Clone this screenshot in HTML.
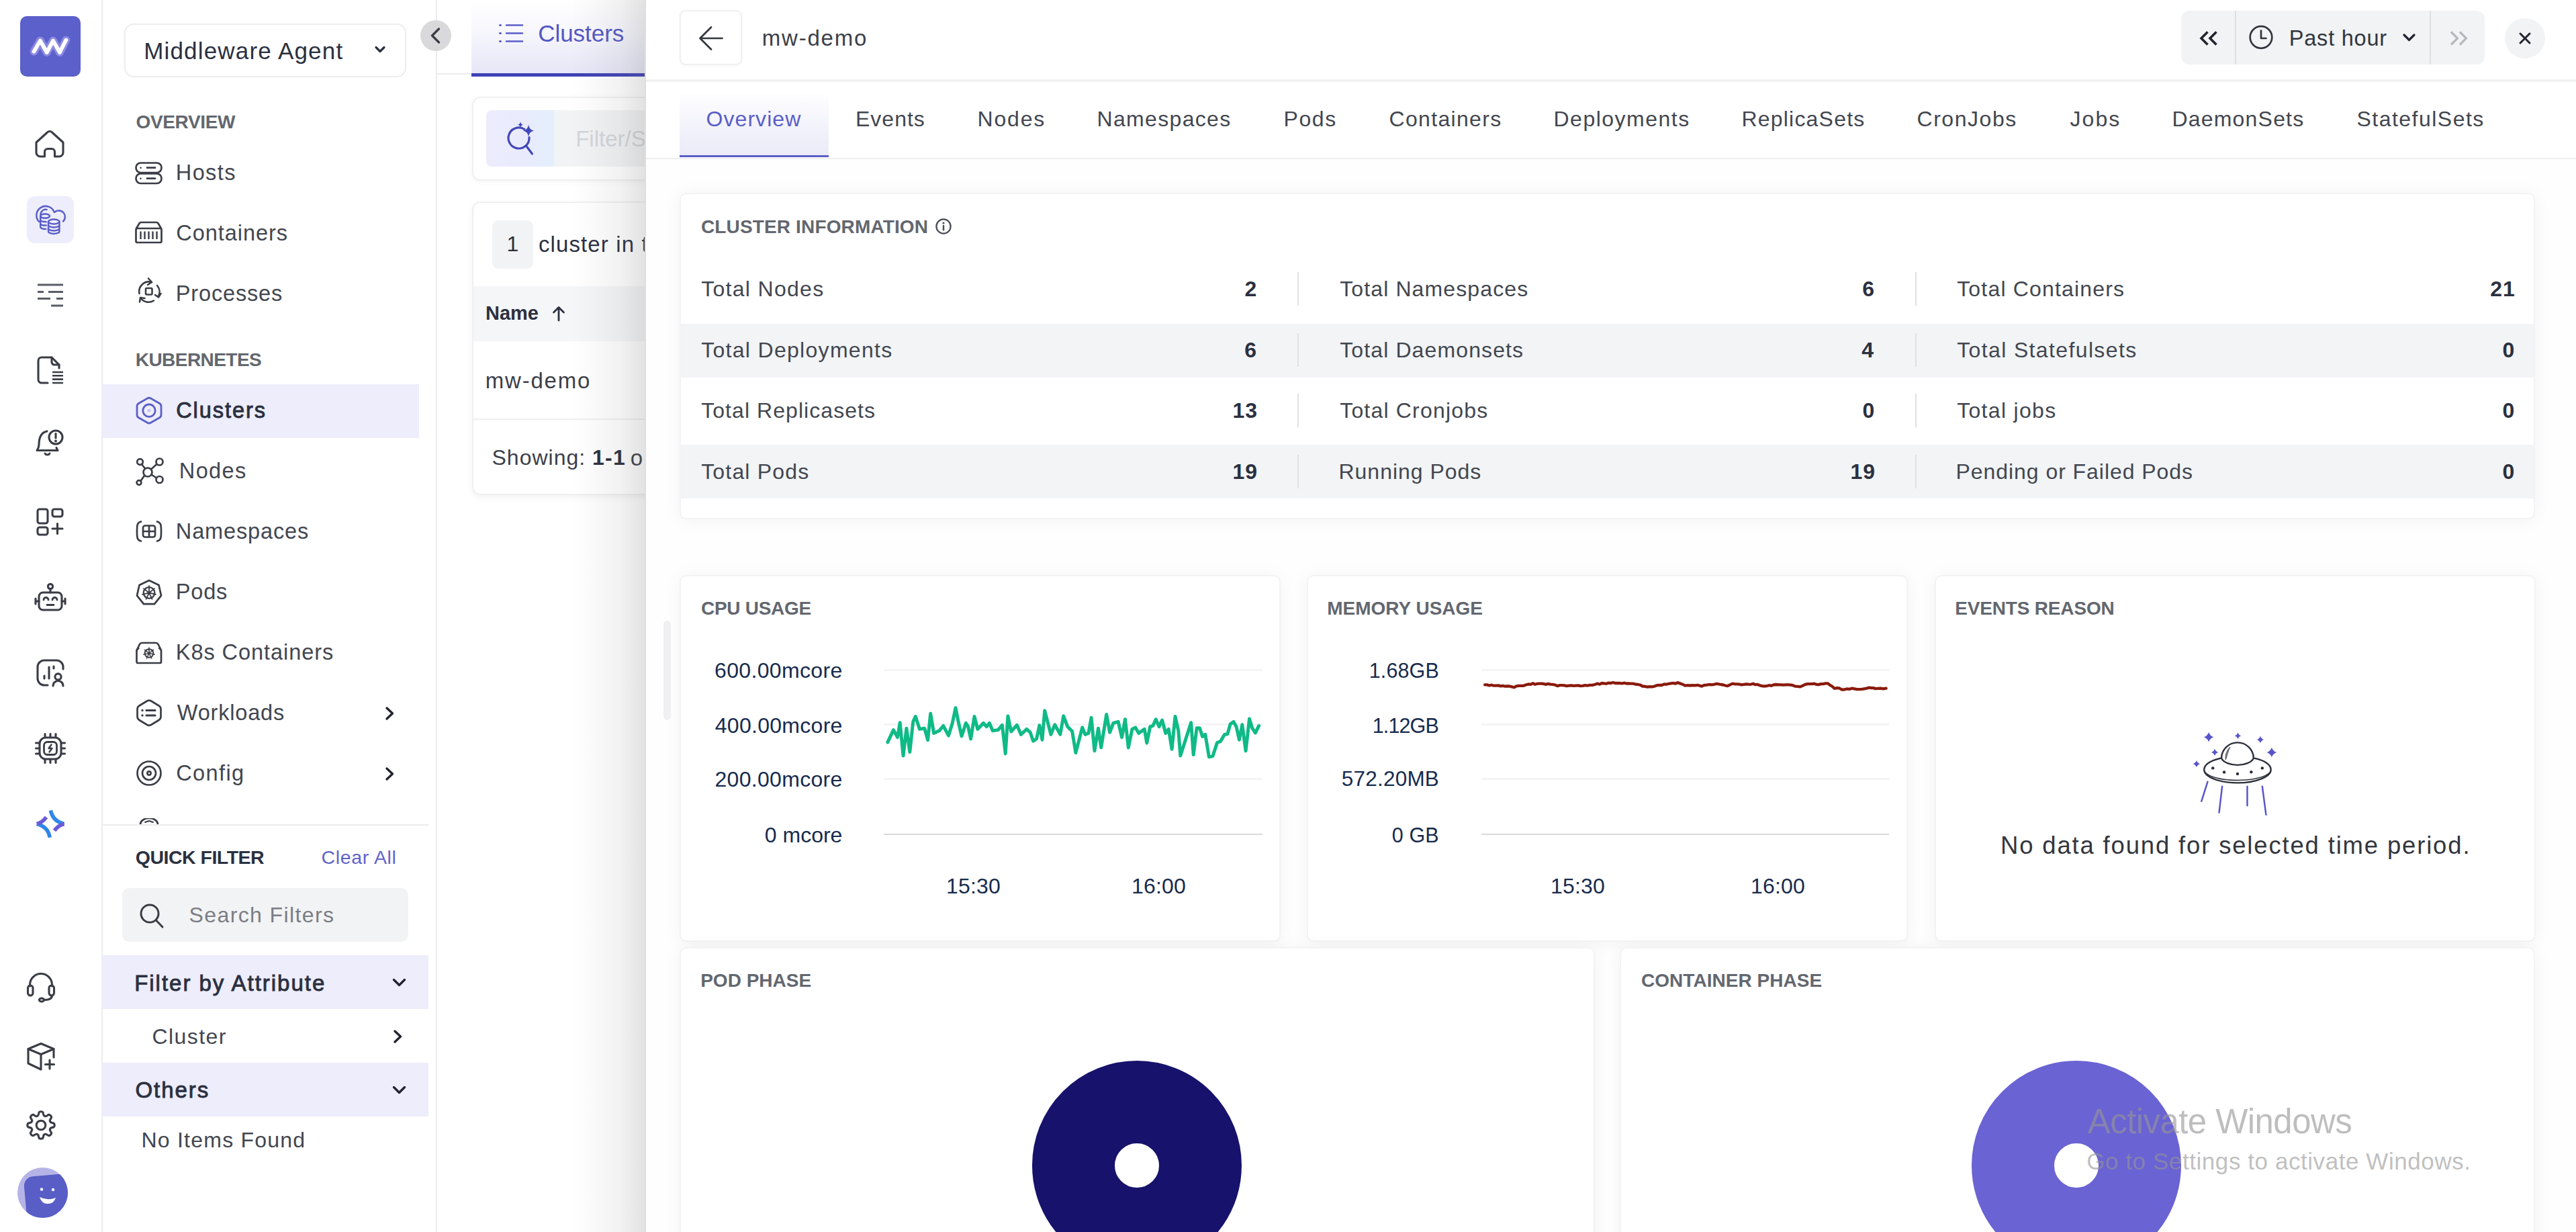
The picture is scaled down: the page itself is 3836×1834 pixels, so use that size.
<!DOCTYPE html>
<html lang="en"><head><meta charset="utf-8"><title>mw-demo - Clusters</title>
<style>
html,body{margin:0;padding:0;}
body{width:3836px;height:1834px;overflow:hidden;position:relative;background:#fff;font-family:"Liberation Sans",sans-serif;}
.t{position:absolute;white-space:nowrap;}
.b{position:absolute;box-sizing:border-box;}
</style></head><body>
<div class="b" style="left:151px;top:0px;width:2px;height:1834px;background:#ececee;"></div>
<div class="b" style="left:30px;top:24px;width:90px;height:90px;background:#5c60ca;border-radius:10px;"></div>
<svg class="b" style="left:30px;top:24px;" width="90" height="90" viewBox="0 0 90 90" fill="none" stroke-linecap="round" stroke-linejoin="round"><path d="M20.5 52.700 L29.900 36.600 L39.700 54 L49.100 36.600 L58.900 54 L68.300 35.700" stroke="#8b89e4" stroke-width="12"/>
<path d="M20.5 52.700 L29.900 36.600 L39.700 54 L49.100 36.600 L58.900 54 L68.300 35.700" stroke="#fff" stroke-width="5.800"/></svg>
<svg class="b" style="left:50px;top:190px;" width="50" height="50" viewBox="0 0 50 50" fill="none" stroke-linecap="round" stroke-linejoin="round"><path d="M4 22 L20.5 7 a5 5 0 0 1 7 0 L44 22 V37 a6 6 0 0 1 -6 6 h-6.500 v-7 a4.500 4.500 0 0 0 -4.500 -4.500 h-6 a4.500 4.500 0 0 0 -4.500 4.500 V43 h-6.500 a6 6 0 0 1 -6 -6 Z" stroke="#3a3d46" stroke-width="3.1"/></svg>
<div class="b" style="left:40px;top:292px;width:70px;height:70px;background:#ededfb;border-radius:12px;"></div>
<svg class="b" style="left:50px;top:302px;" width="50" height="50" viewBox="0 0 50 50" fill="none" stroke-linecap="round" stroke-linejoin="round"><path d="M8 28 A13.700 13.700 0 1 1 30.700 13.500" stroke="#5b5fc7" stroke-width="2.500"/>
<path d="M10.500 17.500 a7.500 7.500 0 0 1 9 -7.500" stroke="#5b5fc7" stroke-width="2.500"/>
<path d="M31 14 a8.800 8.800 0 0 1 13 13.500" stroke="#5b5fc7" stroke-width="2.500"/>
<ellipse cx="17.100" cy="19.600" rx="6.900" ry="3.200" stroke="#5b5fc7" stroke-width="2.500"/><path d="M10.200 19.600 V35.800 c0 1.800 3 3.200 8 3.200 M10.200 25 c0 1.800 3 3.200 8.500 3.200 M10.200 30.400 c0 1.800 3 3.200 8.500 3.200" stroke="#5b5fc7" stroke-width="2.500"/>
<ellipse cx="30.200" cy="28" rx="8.200" ry="3.500" stroke="#5b5fc7" stroke-width="2.500"/><path d="M22 28 v14.500 c0 1.900 3.700 3.500 8.200 3.500 s8.200 -1.600 8.200 -3.500 v-14.500 M22 33 c0 1.900 3.700 3.500 8.200 3.500 s8.200 -1.600 8.200 -3.500 M22 38 c0 1.900 3.700 3.500 8.200 3.500 s8.200 -1.600 8.200 -3.500" stroke="#5b5fc7" stroke-width="2.500"/></svg>
<svg class="b" style="left:50px;top:414px;" width="50" height="50" viewBox="0 0 50 50" fill="none" stroke-linecap="round" stroke-linejoin="round"><path d="M6 10 H44 M6 20.5 H15 M22 20.5 H44 M6 30.5 H25 M34 30.5 H44 M26 41 H44" stroke="#5a5d66" stroke-width="3.200" stroke-linecap="butt"/></svg>
<svg class="b" style="left:50px;top:526px;" width="50" height="50" viewBox="0 0 50 50" fill="none" stroke-linecap="round" stroke-linejoin="round"><path d="M21 44 H12 a5 5 0 0 1 -5 -5 V11 a5 5 0 0 1 5 -5 H27 L38 17 V22" stroke="#3a3d46" stroke-width="3.1"/><path d="M27 6 V13 a4 4 0 0 0 4 4 H38" stroke="#3a3d46" stroke-width="3.1"/>
<path d="M28 28 H44 M28 33.3 H44 M28 38.6 H44 M28 44 H44" stroke="#3a3d46" stroke-width="2.6" stroke-linecap="butt"/></svg>
<svg class="b" style="left:50px;top:634px;" width="50" height="50" viewBox="0 0 50 50" fill="none" stroke-linecap="round" stroke-linejoin="round"><path d="M20 8 C10 10 8 20 8 28 C8 32 6 35 5 36.5 H36 C35 35 34.5 34 34 32.5" stroke="#3a3d46" stroke-width="3.1"/><path d="M17 41 a4 4 0 0 0 7 0" stroke="#3a3d46" stroke-width="3.1"/>
<circle cx="33" cy="17" r="10" stroke="#3a3d46" stroke-width="3.1"/><path d="M33 11.5 V18" stroke="#3a3d46" stroke-width="3.1"/><circle cx="33" cy="22.5" r="1.2" fill="#3a3d46" stroke="#3a3d46" stroke-width="1.5"/></svg>
<svg class="b" style="left:50px;top:752px;" width="50" height="50" viewBox="0 0 50 50" fill="none" stroke-linecap="round" stroke-linejoin="round"><rect x="6" y="6" width="15" height="21" rx="3" stroke="#3a3d46" stroke-width="3.1"/><rect x="28" y="6" width="15" height="11" rx="3" stroke="#3a3d46" stroke-width="3.1"/><rect x="6" y="33" width="15" height="11" rx="3" stroke="#3a3d46" stroke-width="3.1"/><path d="M35.500 27.500 V42.500 M28 35 H43" stroke="#3a3d46" stroke-width="3.1"/></svg>
<svg class="b" style="left:50px;top:866px;" width="50" height="50" viewBox="0 0 50 50" fill="none" stroke-linecap="round" stroke-linejoin="round"><circle cx="25" cy="7" r="3.6" stroke="#3a3d46" stroke-width="3.1"/><path d="M25 11 V16" stroke="#3a3d46" stroke-width="3.1"/><rect x="8" y="16" width="34" height="26" rx="6" stroke="#3a3d46" stroke-width="3.1"/>
<path d="M3 25 V33 M47 25 V33 M5 29 h3 M42 29 h3" stroke="#3a3d46" stroke-width="3.1"/><path d="M15 27 a3.5 3.5 0 0 1 7 0 M28 27 a3.5 3.5 0 0 1 7 0 M20 34.5 H30" stroke="#3a3d46" stroke-width="2.8"/></svg>
<svg class="b" style="left:50px;top:977px;" width="50" height="50" viewBox="0 0 50 50" fill="none" stroke-linecap="round" stroke-linejoin="round"><path d="M21 43 H16 a10 10 0 0 1 -10 -10 V16 a10 10 0 0 1 10 -10 H34 a10 10 0 0 1 10 10 V19" stroke="#3a3d46" stroke-width="3.1"/>
<path d="M16 29 V33 M23 16 V33 M30 15 V18" stroke="#3a3d46" stroke-width="3.1"/><circle cx="36.5" cy="30.5" r="4.6" stroke="#3a3d46" stroke-width="3.1"/><path d="M29 44 a7.5 7.5 0 0 1 15 0" stroke="#3a3d46" stroke-width="3.1"/></svg>
<svg class="b" style="left:50px;top:1089px;" width="50" height="50" viewBox="0 0 50 50" fill="none" stroke-linecap="round" stroke-linejoin="round"><rect x="9" y="9" width="32" height="32" rx="9" stroke="#3a3d46" stroke-width="3.1"/><rect x="15.5" y="15.500" width="19" height="19" rx="5" stroke="#3a3d46" stroke-width="2.8"/>
<path d="M17 3.5 V8 M25 3.5 V8 M33 3.500 V8 M17 42 V46.5 M25 42 V46.5 M33 42 V46.5 M3.5 17 H8 M3.5 25 H8 M3.5 33 H8 M42 17 H46.500 M42 25 H46.5 M42 33 H46.5" stroke="#3a3d46" stroke-width="3.1"/>
<path d="M26.5 19.500 L22.500 25 H27.5 L23.5 30.500" stroke="#3a3d46" stroke-width="2.4"/></svg>
<svg class="b" style="left:50px;top:1201px;" width="50" height="50" viewBox="0 0 50 50" fill="none" stroke-linecap="round" stroke-linejoin="round"><path d="M25.400 5.400 Q28.500 21.500 45.500 25.500" stroke="#2f86ea" stroke-width="5.600" stroke-linecap="butt"/>
<path d="M4.800 25.500 Q21.500 29.500 24.200 45.700" stroke="#2f86ea" stroke-width="5.600" stroke-linecap="butt"/>
<path d="M4.800 25.500 Q13 23.500 19 15.500" stroke="#6a5bd6" stroke-width="5.600" stroke-linecap="butt"/>
<path d="M45.500 25.500 Q37 27.500 31 35.500" stroke="#6a5bd6" stroke-width="5.600" stroke-linecap="butt"/></svg>
<svg class="b" style="left:36px;top:1444px;" width="50" height="50" viewBox="0 0 50 50" fill="none" stroke-linecap="round" stroke-linejoin="round"><path d="M8.500 24 V22 a16.500 16.500 0 0 1 33 0 V24" stroke="#3a3d46" stroke-width="3.1"/><rect x="5.500" y="23" width="7.500" height="15" rx="3.700" stroke="#3a3d46" stroke-width="3.1"/><rect x="37" y="23" width="7.500" height="15" rx="3.700" stroke="#3a3d46" stroke-width="3.1"/>
<path d="M41.500 38 c0 4 -4 6.500 -12 6.500" stroke="#3a3d46" stroke-width="3.1"/><ellipse cx="26" cy="44.500" rx="3.600" ry="2.400" stroke="#3a3d46" stroke-width="3.1"/></svg>
<svg class="b" style="left:36px;top:1548px;" width="50" height="50" viewBox="0 0 50 50" fill="none" stroke-linecap="round" stroke-linejoin="round"><path d="M25 5.500 L44 13.500 L25 21.500 L6 13.500 Z" stroke="#3a3d46" stroke-width="3.1"/><path d="M6 13.500 V35 L25 44 V21.500" stroke="#3a3d46" stroke-width="3.1"/><path d="M44 13.500 V26" stroke="#3a3d46" stroke-width="3.1"/><path d="M38 30 V43 M31.500 36.500 H44.500" stroke="#3a3d46" stroke-width="3.1"/></svg>
<svg class="b" style="left:36px;top:1650px;" width="50" height="50" viewBox="0 0 50 50" fill="none" stroke-linecap="round" stroke-linejoin="round"><path d="M21.6 7.7 Q21.8 4.8 25.0 4.8 Q28.2 4.8 28.4 7.7 Q28.7 10.7 30.6 11.5 Q32.5 12.3 34.8 10.3 Q37.0 8.4 39.3 10.7 Q41.6 13.0 39.7 15.2 Q37.7 17.5 38.5 19.4 Q39.3 21.3 42.3 21.6 Q45.2 21.8 45.2 25.0 Q45.2 28.2 42.3 28.4 Q39.3 28.7 38.5 30.6 Q37.7 32.5 39.7 34.8 Q41.6 37.0 39.3 39.3 Q37.0 41.6 34.8 39.7 Q32.5 37.7 30.6 38.5 Q28.7 39.3 28.4 42.3 Q28.2 45.2 25.0 45.2 Q21.8 45.2 21.6 42.3 Q21.3 39.3 19.4 38.5 Q17.5 37.7 15.2 39.7 Q13.0 41.6 10.7 39.3 Q8.4 37.0 10.3 34.8 Q12.3 32.5 11.5 30.6 Q10.7 28.7 7.7 28.4 Q4.8 28.2 4.8 25.0 Q4.8 21.8 7.7 21.6 Q10.7 21.3 11.5 19.4 Q12.3 17.5 10.3 15.2 Q8.4 13.0 10.7 10.7 Q13.0 8.4 15.2 10.3 Q17.5 12.3 19.4 11.5 Q21.3 10.7 21.6 7.7 Z" stroke="#3a3d46" stroke-width="3.1"/><circle cx="25" cy="25" r="6.800" stroke="#3a3d46" stroke-width="3.1"/></svg>
<svg class="b" style="left:26px;top:1738px" width="75" height="75" viewBox="0 0 75 75"><defs><clipPath id="avc"><circle cx="37.5" cy="37.5" r="37.5"/></clipPath></defs>
<circle cx="37.5" cy="37.5" r="37.500" fill="#b6b4e6"/><g clip-path="url(#avc)"><rect x="12" y="11" width="80" height="80" rx="14" fill="#595dc6" transform="rotate(-5 50 50)"/></g>
<circle cx="36" cy="32.500" r="2.200" fill="#fff"/><circle cx="53" cy="33" r="2.200" fill="#fff"/><path d="M33 44 Q45 50 57 45 Q54 54 45 54 Q36 54 33 44 Z" fill="#fff"/></svg>
<div class="b" style="left:649px;top:0px;width:2px;height:1834px;background:#ebebed;"></div>
<div class="b" style="left:185px;top:35px;width:420px;height:80px;background:#fff;border-radius:14px;border:2px solid #ededef;"></div>
<span class="t" style="left:214.2px;top:58.4px;font-size:35px;line-height:35px;color:#2b3040;letter-spacing:1.18px;">Middleware Agent</span>
<svg class="b" style="left:553px;top:64px;" width="26" height="20" viewBox="0 0 26 20" fill="none" stroke-linecap="round" stroke-linejoin="round"><path d="M7 6.500 L13 12.500 L19 6.500" stroke="#2b3040" stroke-width="3.200"/></svg>
<div class="b" style="left:626px;top:30px;width:46px;height:46px;background:#d9d9db;border-radius:23px;"></div>
<svg class="b" style="left:626px;top:30px;" width="46" height="46" viewBox="0 0 46 46" fill="none" stroke-linecap="round" stroke-linejoin="round"><path d="M27.500 13 L17.500 23 L27.500 33" stroke="#3a3d46" stroke-width="3.400"/></svg>
<span class="t" style="left:202.5px;top:167.8px;font-size:28px;line-height:28px;color:#63676f;font-weight:700;letter-spacing:-0.36px;">OVERVIEW</span>
<span class="t" style="left:201.8px;top:521.8px;font-size:28px;line-height:28px;color:#63676f;font-weight:700;letter-spacing:-0.56px;">KUBERNETES</span>
<span class="t" style="left:261.8px;top:241.1px;font-size:32.5px;line-height:32.5px;color:#42464f;letter-spacing:1.38px;">Hosts</span>
<span class="t" style="left:262.2px;top:331.1px;font-size:32.5px;line-height:32.5px;color:#42464f;letter-spacing:0.97px;">Containers</span>
<span class="t" style="left:261.8px;top:421.1px;font-size:32.5px;line-height:32.5px;color:#42464f;letter-spacing:0.84px;">Processes</span>
<span class="t" style="left:266.8px;top:685.1px;font-size:32.5px;line-height:32.5px;color:#42464f;letter-spacing:1.38px;">Nodes</span>
<span class="t" style="left:261.8px;top:775.1px;font-size:32.5px;line-height:32.5px;color:#42464f;letter-spacing:0.86px;">Namespaces</span>
<span class="t" style="left:261.8px;top:865.1px;font-size:32.5px;line-height:32.5px;color:#42464f;letter-spacing:0.83px;">Pods</span>
<span class="t" style="left:261.8px;top:955.1px;font-size:32.5px;line-height:32.5px;color:#42464f;letter-spacing:0.94px;">K8s Containers</span>
<span class="t" style="left:263.8px;top:1045.1px;font-size:32.5px;line-height:32.5px;color:#42464f;letter-spacing:0.81px;">Workloads</span>
<span class="t" style="left:262.2px;top:1135.1px;font-size:32.5px;line-height:32.5px;color:#42464f;letter-spacing:1.40px;">Config</span>
<div class="b" style="left:152px;top:572px;width:472px;height:80px;background:#ededfb;"></div>
<span class="t" style="left:262.2px;top:595.1px;font-size:32.5px;line-height:32.5px;color:#2b3040;letter-spacing:1.96px;-webkit-text-stroke:0.9px #2b3040;">Clusters</span>
<svg class="b" style="left:199px;top:235px;" width="46" height="46" viewBox="0 0 46 46" fill="none" stroke-linecap="round" stroke-linejoin="round"><rect x="3.500" y="7.500" width="38" height="14.500" rx="7" stroke="#3a3d46" stroke-width="2.700"/><rect x="3.500" y="23.500" width="38" height="14.500" rx="7" stroke="#3a3d46" stroke-width="2.700"/>
<path d="M20 14.700 H32 M20 30.700 H32" stroke="#3a3d46" stroke-width="2.700"/><circle cx="10.500" cy="14.700" r="1.300" fill="#3a3d46"/><circle cx="10.500" cy="30.700" r="1.300" fill="#3a3d46"/></svg>
<svg class="b" style="left:199px;top:324px;" width="46" height="46" viewBox="0 0 46 46" fill="none" stroke-linecap="round" stroke-linejoin="round"><path d="M4 16 L8.500 8.500 a3 3 0 0 1 2.500 -1.500 H34 a3 3 0 0 1 2.500 1.500 L41 16" stroke="#3a3d46" stroke-width="2.700"/><rect x="3.500" y="16" width="38" height="21" rx="2" stroke="#3a3d46" stroke-width="2.700"/>
<path d="M10.500 20.500 V32 M16.500 20.500 V32 M22.500 20.500 V32 M28.500 20.500 V32 M34.500 20.500 V32" stroke="#3a3d46" stroke-width="2.400" stroke-linecap="butt"/></svg>
<svg class="b" style="left:199px;top:411px;" width="46" height="46" viewBox="0 0 46 46" fill="none" stroke-linecap="round" stroke-linejoin="round"><path d="M8.500 26 a14.500 14.500 0 0 1 18 -17" stroke="#3a3d46" stroke-width="2.600"/><path d="M22 3.500 L27 9 L21 13" stroke="#3a3d46" stroke-width="2.600"/>
<path d="M35 14 a14.500 14.500 0 0 1 2 16" stroke="#3a3d46" stroke-width="2.600"/><path d="M40.500 26 L37 31.500 L32 28" stroke="#3a3d46" stroke-width="2.600"/>
<path d="M30 36.500 a14.500 14.500 0 0 1 -19 -3" stroke="#3a3d46" stroke-width="2.600"/><path d="M9 38.500 L10 32 L16.500 33" stroke="#3a3d46" stroke-width="2.600"/>
<rect x="18" y="18" width="9.500" height="9.500" rx="1.500" stroke="#3a3d46" stroke-width="2.600"/></svg>
<svg class="b" style="left:199px;top:588px;" width="46" height="46" viewBox="0 0 46 46" fill="none" stroke-linecap="round" stroke-linejoin="round"><path d="M20.500 5 a5 5 0 0 1 5 0 L38.500 12.500 a5 5 0 0 1 2.500 4.300 V29.500 a5 5 0 0 1 -2.500 4.300 L25.500 41.300 a5 5 0 0 1 -5 0 L7.500 33.800 a5 5 0 0 1 -2.500 -4.300 V16.800 a5 5 0 0 1 2.500 -4.300 Z" stroke="#5b5fc7" stroke-width="2.800"/>
<circle cx="23" cy="23.200" r="9.200" stroke="#5b5fc7" stroke-width="2.800"/><circle cx="23" cy="23.200" r="2.300" fill="#c4c3ee" stroke="none"/></svg>
<svg class="b" style="left:199px;top:677px;" width="50" height="50" viewBox="0 0 50 50" fill="none" stroke-linecap="round" stroke-linejoin="round"><circle cx="21" cy="26" r="6.500" stroke="#3a3d46" stroke-width="2.700"/><circle cx="9.500" cy="10.500" r="4.300" stroke="#3a3d46" stroke-width="2.700"/><circle cx="38.500" cy="10.500" r="5" stroke="#3a3d46" stroke-width="2.700"/><circle cx="38.500" cy="37" r="5" stroke="#3a3d46" stroke-width="2.700"/><circle cx="8" cy="41.500" r="3.400" stroke="#3a3d46" stroke-width="2.700"/>
<path d="M12 14 L17 20.500 M34.500 14 L26 21.500 M26.500 29.500 L34 34.500 M16 31 L10.500 39" stroke="#3a3d46" stroke-width="2.700"/></svg>
<svg class="b" style="left:199px;top:768px;" width="46" height="46" viewBox="0 0 46 46" fill="none" stroke-linecap="round" stroke-linejoin="round"><path d="M11 8.500 C5 10 5 14 5 23 C5 32 5 36 11 37.500 M35 8.500 C41 10 41 14 41 23 C41 32 41 36 35 37.500" stroke="#3a3d46" stroke-width="2.700"/>
<rect x="14" y="14.500" width="18" height="17" rx="3" stroke="#3a3d46" stroke-width="2.700"/><path d="M23 15 V31 M14.500 23 H31.500" stroke="#3a3d46" stroke-width="2.700"/></svg>
<svg class="b" style="left:199px;top:859px;" width="46" height="46" viewBox="0 0 46 46" fill="none" stroke-linecap="round" stroke-linejoin="round"><polygon points="23.0,5.0 37.5,12.0 41.0,27.6 31.0,40.2 15.0,40.2 5.0,27.6 8.5,12.0" stroke="#3a3d46" stroke-width="2.700"/><circle cx="23" cy="23.5" r="8.3" stroke="#3a3d46" stroke-width="2.3"/><circle cx="23" cy="23.5" r="2.3" fill="#3a3d46" stroke="none"/><path d="M23 23.5 L23.0 13.2" stroke="#3a3d46" stroke-width="1.8"/><path d="M23 23.5 L31.1 17.1" stroke="#3a3d46" stroke-width="1.8"/><path d="M23 23.5 L33.0 25.8" stroke="#3a3d46" stroke-width="1.8"/><path d="M23 23.5 L27.5 32.8" stroke="#3a3d46" stroke-width="1.8"/><path d="M23 23.5 L18.5 32.8" stroke="#3a3d46" stroke-width="1.8"/><path d="M23 23.5 L13.0 25.8" stroke="#3a3d46" stroke-width="1.8"/><path d="M23 23.5 L14.9 17.1" stroke="#3a3d46" stroke-width="1.8"/></svg>
<svg class="b" style="left:199px;top:949px;" width="46" height="46" viewBox="0 0 46 46" fill="none" stroke-linecap="round" stroke-linejoin="round"><path d="M4.500 19 L9 10 a4 4 0 0 1 3.500 -2 H33 a4 4 0 0 1 3.500 2 L41 19 V36 a2 2 0 0 1 -2 2 H6.500 a2 2 0 0 1 -2 -2 Z" stroke="#3a3d46" stroke-width="2.700"/><path d="M4.500 19 l3 -3 M41 19 l-3 -3" stroke="#3a3d46" stroke-width="2.400"/><circle cx="23" cy="23.5" r="6.3" stroke="#3a3d46" stroke-width="2"/><circle cx="23" cy="23.5" r="1.8" fill="#3a3d46" stroke="none"/><path d="M23 23.5 L23.0 15.2" stroke="#3a3d46" stroke-width="1.6"/><path d="M23 23.5 L29.5 18.3" stroke="#3a3d46" stroke-width="1.6"/><path d="M23 23.5 L31.1 25.3" stroke="#3a3d46" stroke-width="1.6"/><path d="M23 23.5 L26.6 31.0" stroke="#3a3d46" stroke-width="1.6"/><path d="M23 23.5 L19.4 31.0" stroke="#3a3d46" stroke-width="1.6"/><path d="M23 23.5 L14.9 25.3" stroke="#3a3d46" stroke-width="1.6"/><path d="M23 23.5 L16.5 18.3" stroke="#3a3d46" stroke-width="1.6"/></svg>
<svg class="b" style="left:199px;top:1038px;" width="46" height="46" viewBox="0 0 46 46" fill="none" stroke-linecap="round" stroke-linejoin="round"><path d="M20 5.500 a6 6 0 0 1 6 0 L37.500 12.500 a6 6 0 0 1 3 5 V29 a6 6 0 0 1 -3 5 L26 41 a6 6 0 0 1 -6 0 L8.500 34 a6 6 0 0 1 -3 -5 V17.500 a6 6 0 0 1 3 -5 Z" stroke="#3a3d46" stroke-width="2.700"/>
<path d="M19 19.500 H32 M19 27 H32" stroke="#3a3d46" stroke-width="3.200"/><circle cx="13" cy="19.500" r="1.700" fill="#3a3d46"/><circle cx="13" cy="27" r="1.700" fill="#3a3d46"/></svg>
<svg class="b" style="left:199px;top:1128px;" width="46" height="46" viewBox="0 0 46 46" fill="none" stroke-linecap="round" stroke-linejoin="round"><circle cx="23" cy="23" r="17.500" stroke="#3a3d46" stroke-width="2.700"/><circle cx="23" cy="23" r="10" stroke="#3a3d46" stroke-width="2.700"/><circle cx="23" cy="23" r="2.600" stroke="#3a3d46" stroke-width="2.700"/></svg>
<svg class="b" style="left:570px;top:1049px;" width="22" height="26" viewBox="0 0 22 26" fill="none" stroke-linecap="round" stroke-linejoin="round"><path d="M6 5 L14.500 13 L6 21" stroke="#22252e" stroke-width="3.400"/></svg>
<svg class="b" style="left:570px;top:1139px;" width="22" height="26" viewBox="0 0 22 26" fill="none" stroke-linecap="round" stroke-linejoin="round"><path d="M6 5 L14.500 13 L6 21" stroke="#22252e" stroke-width="3.400"/></svg>
<svg class="b" style="left:199px;top:1218px;overflow:hidden;" width="46" height="12" viewBox="0 0 46 12" fill="none" stroke-linecap="round" stroke-linejoin="round"><path d="M10 9 a13 9 0 0 1 26 0" stroke="#3a3d46" stroke-width="2.700"/><path d="M17 6 l6 -2 l6 2" stroke="#3a3d46" stroke-width="2"/></svg>
<div class="b" style="left:152px;top:1227px;width:486px;height:2px;background:#ececee;"></div>
<span class="t" style="left:201.8px;top:1262.1px;font-size:28.5px;line-height:28.5px;color:#2b3040;font-weight:700;letter-spacing:-0.50px;">QUICK FILTER</span>
<span class="t" style="left:478.5px;top:1262.1px;font-size:28.5px;line-height:28.5px;color:#5f63c9;letter-spacing:0.66px;">Clear All</span>
<div class="b" style="left:182px;top:1322px;width:426px;height:80px;background:#f2f3f4;border-radius:10px;"></div>
<svg class="b" style="left:204px;top:1342px;" width="44" height="44" viewBox="0 0 44 44" fill="none" stroke-linecap="round" stroke-linejoin="round"><circle cx="19" cy="18" r="13" stroke="#3a3d46" stroke-width="3"/><path d="M28.500 28 L38 38" stroke="#3a3d46" stroke-width="3"/></svg>
<span class="t" style="left:281.5px;top:1346.4px;font-size:32px;line-height:32px;color:#7a7d85;letter-spacing:1.40px;">Search Filters</span>
<div class="b" style="left:152px;top:1422px;width:486px;height:80px;background:#ededfb;"></div>
<span class="t" style="left:200.2px;top:1446.9px;font-size:33px;line-height:33px;color:#2b3040;letter-spacing:1.97px;-webkit-text-stroke:0.9px #2b3040;">Filter by Attribute</span>
<svg class="b" style="left:581px;top:1452px;" width="28" height="22" viewBox="0 0 28 22" fill="none" stroke-linecap="round" stroke-linejoin="round"><path d="M5.500 6.500 L13.500 14.500 L21.500 6.500" stroke="#22252e" stroke-width="3.400"/></svg>
<span class="t" style="left:226.5px;top:1527.4px;font-size:32px;line-height:32px;color:#42464f;letter-spacing:1.42px;">Cluster</span>
<svg class="b" style="left:582px;top:1530px;" width="22" height="26" viewBox="0 0 22 26" fill="none" stroke-linecap="round" stroke-linejoin="round"><path d="M6 5 L14.500 13 L6 21" stroke="#22252e" stroke-width="3.400"/></svg>
<div class="b" style="left:152px;top:1582px;width:486px;height:80px;background:#ededfb;"></div>
<span class="t" style="left:201.5px;top:1605.9px;font-size:33px;line-height:33px;color:#2b3040;letter-spacing:1.95px;-webkit-text-stroke:0.9px #2b3040;">Others</span>
<svg class="b" style="left:581px;top:1612px;" width="28" height="22" viewBox="0 0 28 22" fill="none" stroke-linecap="round" stroke-linejoin="round"><path d="M5.500 6.500 L13.500 14.500 L21.500 6.500" stroke="#22252e" stroke-width="3.400"/></svg>
<span class="t" style="left:210.5px;top:1681.4px;font-size:32px;line-height:32px;color:#42464f;letter-spacing:1.23px;">No Items Found</span>
<div class="b" style="left:651px;top:109px;width:320px;height:2px;background:#ececee;"></div>
<div class="b" style="left:702px;top:0px;width:270px;height:110px;background:linear-gradient(180deg,#ffffff 0%,#f6f6fd 45%,#e6e6f7 100%);"></div>
<div class="b" style="left:702px;top:109px;width:270px;height:5px;background:#3f42b5;"></div>
<svg class="b" style="left:740px;top:28px;" width="44" height="44" viewBox="0 0 44 44" fill="none" stroke-linecap="round" stroke-linejoin="round"><path d="M14 9.500 H38 M14 21.500 H38 M14 33.500 H38" stroke="#5b5fc7" stroke-width="2.600"/><path d="M4.500 9.500 h1 M4.500 21.500 h1 M4.500 33.500 h1" stroke="#5b5fc7" stroke-width="3"/></svg>
<span class="t" style="left:801.2px;top:31.9px;font-size:35px;line-height:35px;color:#5357c2;letter-spacing:-0.04px;">Clusters</span>
<div class="b" style="left:703px;top:144px;width:320px;height:125px;background:#fff;border-radius:12px;border:2px solid #f0f0f2;box-shadow:0 2px 8px rgba(0,0,0,.04);"></div>
<div class="b" style="left:724px;top:164px;width:101px;height:84px;background:linear-gradient(90deg,#ececfd 0%,#e9ebfc 55%,#e3effc 100%);border-radius:8px 0 0 8px;"></div>
<div class="b" style="left:825px;top:164px;width:200px;height:84px;background:#f2f3f4;"></div>
<svg class="b" style="left:748px;top:178px;" width="56" height="60" viewBox="0 0 56 60" fill="none" stroke-linecap="round" stroke-linejoin="round"><path d="M33 14.500 a15.500 15.500 0 1 0 7 12" stroke="#4347b8" stroke-width="3.200"/><path d="M35.500 39 L44.500 51" stroke="#4347b8" stroke-width="3.200"/>
<path d="M39 7.500 Q40 15 47 16.500 Q40 18 39 25.500 Q38 18 31 16.500 Q38 15 39 7.500 Z" fill="#4347b8" stroke="none"/><path d="M27 3 Q27.500 7 31 7.800 Q27.500 8.600 27 12.500 Q26.500 8.600 23 7.800 Q26.500 7 27 3 Z" fill="#4347b8" stroke="none"/></svg>
<span class="t" style="left:857.2px;top:189.9px;font-size:33px;line-height:33px;color:#d3d5da;">Filter/Search</span>
<div class="b" style="left:703px;top:300px;width:320px;height:437px;background:#fff;border-radius:12px;border:2px solid #f0f0f2;box-shadow:0 4px 10px rgba(0,0,0,.05);"></div>
<div class="b" style="left:733px;top:328px;width:61px;height:72px;background:#f2f3f4;border-radius:9px;"></div>
<span class="t" style="left:754.6px;top:347.4px;font-size:32px;line-height:32px;color:#2b3040;">1</span>
<span class="t" style="left:801.9px;top:346.9px;font-size:33px;line-height:33px;color:#2b3040;letter-spacing:1.12px;">cluster in total</span>
<div class="b" style="left:705px;top:426px;width:320px;height:82px;background:#f5f6f8;"></div>
<span class="t" style="left:723.0px;top:451.8px;font-size:29px;line-height:29px;color:#2b3040;font-weight:700;">Name</span>
<svg class="b" style="left:818px;top:452px;" width="28" height="30" viewBox="0 0 28 30" fill="none" stroke-linecap="round" stroke-linejoin="round"><path d="M14 25 V6 M6.500 13 L14 5.500 L21.500 13" stroke="#2b3040" stroke-width="2.800"/></svg>
<span class="t" style="left:722.8px;top:549.9px;font-size:33px;line-height:33px;color:#3c4049;letter-spacing:1.79px;">mw-demo</span>
<div class="b" style="left:705px;top:623px;width:320px;height:2px;background:#efeff1;"></div>
<span class="t" style="left:732.5px;top:665.4px;font-size:32px;line-height:32px;color:#3c4049;letter-spacing:1px;">Showing: </span>
<span class="t" style="left:882.0px;top:665.4px;font-size:32px;line-height:32px;color:#2b3040;font-weight:700;letter-spacing:1.25px;">1-1</span>
<span class="t" style="left:938.8px;top:664.9px;font-size:33px;line-height:33px;color:#3c4049;letter-spacing:3.5px;">of 1</span>
<div class="b" style="left:851px;top:0px;width:110px;height:1834px;background:linear-gradient(90deg,rgba(110,110,110,0) 0%,rgba(110,110,110,.035) 30%,rgba(110,110,110,.09) 65%,rgba(100,100,100,.19) 100%);"></div>
<div class="b" style="left:961px;top:0px;width:2875px;height:1834px;background:#fff;"></div>
<div class="b" style="left:960px;top:0px;width:2px;height:1834px;background:#dededf;"></div>
<div class="b" style="left:962px;top:236px;width:2874px;height:1598px;background:#fefefe;"></div>
<div class="b" style="left:962px;top:118px;width:2874px;height:4px;background:linear-gradient(180deg,#f6f6f7,#eeeef0 50%,#f6f6f7);"></div>
<div class="b" style="left:1012px;top:15px;width:93px;height:82px;background:#fff;border-radius:9px;border:2px solid #f0f0f2;box-shadow:0 1px 4px rgba(0,0,0,.04);"></div>
<svg class="b" style="left:1030px;top:30px;" width="60" height="54" viewBox="0 0 60 54" fill="none" stroke-linecap="round" stroke-linejoin="round"><path d="M45.500 27 H12.500 M29 10.500 L12.500 27 L29 43.500" stroke="#33363e" stroke-width="2.700"/></svg>
<span class="t" style="left:1134.8px;top:39.9px;font-size:33px;line-height:33px;color:#3c4049;letter-spacing:1.79px;">mw-demo</span>
<div class="b" style="left:3248px;top:16px;width:452px;height:80px;background:#f1f3f5;border-radius:12px;"></div>
<div class="b" style="left:3328px;top:16px;width:2px;height:80px;background:#dcdee1;"></div>
<div class="b" style="left:3618px;top:16px;width:2px;height:80px;background:#dcdee1;"></div>
<svg class="b" style="left:3268px;top:36px;" width="44" height="42" viewBox="0 0 44 42" fill="none" stroke-linecap="round" stroke-linejoin="round"><path d="M19.500 11.500 L10 21 L19.500 30.500 M32.500 11.500 L23 21 L32.500 30.500" stroke="#22252e" stroke-width="3.600" stroke-linejoin="miter" stroke-linecap="butt"/></svg>
<svg class="b" style="left:3345px;top:33px;" width="46" height="46" viewBox="0 0 46 46" fill="none" stroke-linecap="round" stroke-linejoin="round"><circle cx="22" cy="22.500" r="16.300" stroke="#33363e" stroke-width="2.700"/><path d="M22 12.500 V24 H29.500" stroke="#33363e" stroke-width="2.700"/></svg>
<span class="t" style="left:3408.8px;top:40.6px;font-size:32.5px;line-height:32.5px;color:#33363e;letter-spacing:0.78px;">Past hour</span>
<svg class="b" style="left:3574px;top:44px;" width="28" height="24" viewBox="0 0 28 24" fill="none" stroke-linecap="round" stroke-linejoin="round"><path d="M6 8 L13.500 15.500 L21 8" stroke="#22252e" stroke-width="3.200"/></svg>
<svg class="b" style="left:3640px;top:36px;" width="44" height="42" viewBox="0 0 44 42" fill="none" stroke-linecap="round" stroke-linejoin="round"><path d="M10 11.500 L19.500 21 L10 30.500 M23 11.500 L32.500 21 L23 30.500" stroke="#b6b8bd" stroke-width="3.200" stroke-linejoin="miter" stroke-linecap="butt"/></svg>
<div class="b" style="left:3730px;top:27px;width:60px;height:60px;background:#f1f3f5;border-radius:30px;"></div>
<svg class="b" style="left:3745px;top:42px;" width="30" height="30" viewBox="0 0 30 30" fill="none" stroke-linecap="round" stroke-linejoin="round"><path d="M8 8 L22 22 M22 8 L8 22" stroke="#22252e" stroke-width="3"/></svg>
<div class="b" style="left:962px;top:235px;width:2874px;height:2px;background:#efeff1;"></div>
<div class="b" style="left:1012px;top:138px;width:222px;height:94px;background:linear-gradient(180deg,#ffffff 0%,#f4f4fc 45%,#ebebf8 100%);"></div>
<div class="b" style="left:1012px;top:231px;width:222px;height:3px;background:#5b5fc7;"></div>
<span class="t" style="left:1051.5px;top:160.9px;font-size:32px;line-height:32px;color:#5a5ec6;letter-spacing:1.07px;">Overview</span>
<span class="t" style="left:1274.0px;top:161.4px;font-size:32px;line-height:32px;color:#42464f;letter-spacing:1.00px;">Events</span>
<span class="t" style="left:1455.5px;top:161.4px;font-size:32px;line-height:32px;color:#42464f;letter-spacing:1.81px;">Nodes</span>
<span class="t" style="left:1633.5px;top:161.4px;font-size:32px;line-height:32px;color:#42464f;letter-spacing:1.33px;">Namespaces</span>
<span class="t" style="left:1911.5px;top:161.4px;font-size:32px;line-height:32px;color:#42464f;letter-spacing:1.58px;">Pods</span>
<span class="t" style="left:2068.5px;top:161.4px;font-size:32px;line-height:32px;color:#42464f;letter-spacing:1.33px;">Containers</span>
<span class="t" style="left:2313.5px;top:161.4px;font-size:32px;line-height:32px;color:#42464f;letter-spacing:1.50px;">Deployments</span>
<span class="t" style="left:2593.5px;top:161.4px;font-size:32px;line-height:32px;color:#42464f;letter-spacing:1.20px;">ReplicaSets</span>
<span class="t" style="left:2854.5px;top:161.4px;font-size:32px;line-height:32px;color:#42464f;letter-spacing:1.54px;">CronJobs</span>
<span class="t" style="left:3082.5px;top:161.4px;font-size:32px;line-height:32px;color:#42464f;letter-spacing:2.08px;">Jobs</span>
<span class="t" style="left:3234.5px;top:161.4px;font-size:32px;line-height:32px;color:#42464f;letter-spacing:1.19px;">DaemonSets</span>
<span class="t" style="left:3509.5px;top:161.4px;font-size:32px;line-height:32px;color:#42464f;letter-spacing:1.48px;">StatefulSets</span>
<div class="b" style="left:1012px;top:287px;width:2763px;height:486px;background:#fff;border-radius:10px;border:2px solid #f3f3f5;box-shadow:0 2px 26px rgba(20,20,40,.05);"></div>
<span class="t" style="left:1044.0px;top:324.3px;font-size:28px;line-height:28px;color:#63676f;font-weight:700;letter-spacing:0.14px;">CLUSTER INFORMATION</span>
<svg class="b" style="left:1390.7px;top:322.5px;" width="28" height="28" viewBox="0 0 28 28" fill="none" stroke-linecap="round" stroke-linejoin="round"><circle cx="14" cy="14" r="10.600" stroke="#4a4e57" stroke-width="2.300"/><path d="M14 13 V19.200" stroke="#4a4e57" stroke-width="2.500"/><circle cx="14" cy="9" r="1.600" fill="#4a4e57"/></svg>
<div class="b" style="left:1014px;top:482px;width:2759px;height:80px;background:#f2f4f6;"></div>
<div class="b" style="left:1014px;top:662px;width:2759px;height:80px;background:#f2f4f6;"></div>
<span class="t" style="left:1044.2px;top:414.4px;font-size:32px;line-height:32px;color:#42464f;letter-spacing:1.30px;">Total Nodes</span>
<span class="t" style="left:1853.5px;top:414.4px;font-size:32px;line-height:32px;color:#2b3040;font-weight:700;letter-spacing:1px;">2</span>
<span class="t" style="left:1995.2px;top:414.4px;font-size:32px;line-height:32px;color:#42464f;letter-spacing:1.12px;">Total Namespaces</span>
<span class="t" style="left:2773.2px;top:414.4px;font-size:32px;line-height:32px;color:#2b3040;font-weight:700;letter-spacing:1px;">6</span>
<span class="t" style="left:2914.2px;top:414.4px;font-size:32px;line-height:32px;color:#42464f;letter-spacing:1.18px;">Total Containers</span>
<span class="t" style="left:3708.2px;top:414.4px;font-size:32px;line-height:32px;color:#2b3040;font-weight:700;letter-spacing:1px;">21</span>
<div class="b" style="left:1932px;top:405px;width:2px;height:50px;background:#dfe1e4;"></div>
<div class="b" style="left:2852px;top:405px;width:2px;height:50px;background:#dfe1e4;"></div>
<span class="t" style="left:1044.2px;top:505.4px;font-size:32px;line-height:32px;color:#42464f;letter-spacing:1.30px;">Total Deployments</span>
<span class="t" style="left:1853.2px;top:505.4px;font-size:32px;line-height:32px;color:#2b3040;font-weight:700;letter-spacing:1px;">6</span>
<span class="t" style="left:1995.2px;top:505.4px;font-size:32px;line-height:32px;color:#42464f;letter-spacing:1.12px;">Total Daemonsets</span>
<span class="t" style="left:2772.2px;top:505.4px;font-size:32px;line-height:32px;color:#2b3040;font-weight:700;letter-spacing:1px;">4</span>
<span class="t" style="left:2914.2px;top:505.4px;font-size:32px;line-height:32px;color:#42464f;letter-spacing:1.37px;">Total Statefulsets</span>
<span class="t" style="left:3726.5px;top:505.4px;font-size:32px;line-height:32px;color:#2b3040;font-weight:700;letter-spacing:1px;">0</span>
<div class="b" style="left:1932px;top:496px;width:2px;height:50px;background:#dfe1e4;"></div>
<div class="b" style="left:2852px;top:496px;width:2px;height:50px;background:#dfe1e4;"></div>
<span class="t" style="left:1044.2px;top:595.4px;font-size:32px;line-height:32px;color:#42464f;letter-spacing:1.06px;">Total Replicasets</span>
<span class="t" style="left:1835.5px;top:595.4px;font-size:32px;line-height:32px;color:#2b3040;font-weight:700;letter-spacing:1px;">13</span>
<span class="t" style="left:1995.2px;top:595.4px;font-size:32px;line-height:32px;color:#42464f;letter-spacing:1.19px;">Total Cronjobs</span>
<span class="t" style="left:2773.5px;top:595.4px;font-size:32px;line-height:32px;color:#2b3040;font-weight:700;letter-spacing:1px;">0</span>
<span class="t" style="left:2914.2px;top:595.4px;font-size:32px;line-height:32px;color:#42464f;letter-spacing:1.31px;">Total jobs</span>
<span class="t" style="left:3726.5px;top:595.4px;font-size:32px;line-height:32px;color:#2b3040;font-weight:700;letter-spacing:1px;">0</span>
<div class="b" style="left:1932px;top:586px;width:2px;height:50px;background:#dfe1e4;"></div>
<div class="b" style="left:2852px;top:586px;width:2px;height:50px;background:#dfe1e4;"></div>
<span class="t" style="left:1044.2px;top:686.4px;font-size:32px;line-height:32px;color:#42464f;letter-spacing:1.17px;">Total Pods</span>
<span class="t" style="left:1835.5px;top:686.4px;font-size:32px;line-height:32px;color:#2b3040;font-weight:700;letter-spacing:1px;">19</span>
<span class="t" style="left:1993.5px;top:686.4px;font-size:32px;line-height:32px;color:#42464f;letter-spacing:0.98px;">Running Pods</span>
<span class="t" style="left:2755.5px;top:686.4px;font-size:32px;line-height:32px;color:#2b3040;font-weight:700;letter-spacing:1px;">19</span>
<span class="t" style="left:2912.5px;top:686.4px;font-size:32px;line-height:32px;color:#42464f;letter-spacing:0.95px;">Pending or Failed Pods</span>
<span class="t" style="left:3726.5px;top:686.4px;font-size:32px;line-height:32px;color:#2b3040;font-weight:700;letter-spacing:1px;">0</span>
<div class="b" style="left:1932px;top:677px;width:2px;height:50px;background:#dfe1e4;"></div>
<div class="b" style="left:2852px;top:677px;width:2px;height:50px;background:#dfe1e4;"></div>
<div class="b" style="left:1012px;top:856px;width:895px;height:546px;background:#fff;border-radius:10px;border:2px solid #f3f3f5;box-shadow:0 2px 26px rgba(20,20,40,.05);"></div>
<div class="b" style="left:1946px;top:856px;width:895px;height:546px;background:#fff;border-radius:10px;border:2px solid #f3f3f5;box-shadow:0 2px 26px rgba(20,20,40,.05);"></div>
<div class="b" style="left:2881px;top:856px;width:895px;height:546px;background:#fff;border-radius:10px;border:2px solid #f3f3f5;box-shadow:0 2px 26px rgba(20,20,40,.05);"></div>
<span class="t" style="left:1044.0px;top:892.3px;font-size:28px;line-height:28px;color:#63676f;font-weight:700;letter-spacing:-0.28px;">CPU USAGE</span>
<span class="t" style="left:1976.2px;top:892.3px;font-size:28px;line-height:28px;color:#63676f;font-weight:700;">MEMORY USAGE</span>
<span class="t" style="left:2911.2px;top:892.3px;font-size:28px;line-height:28px;color:#63676f;font-weight:700;letter-spacing:-0.17px;">EVENTS REASON</span>
<div class="b" style="left:1316px;top:996px;width:564px;height:3px;background:#f4f4f5;"></div>
<div class="b" style="left:1316px;top:1077px;width:564px;height:3px;background:#f4f4f5;"></div>
<div class="b" style="left:1316px;top:1158px;width:564px;height:3px;background:#f4f4f5;"></div>
<div class="b" style="left:1316px;top:1241px;width:564px;height:2px;background:#d8d9dc;"></div>
<div class="b" style="left:2206px;top:996px;width:607px;height:3px;background:#f4f4f5;"></div>
<div class="b" style="left:2206px;top:1077px;width:607px;height:3px;background:#f4f4f5;"></div>
<div class="b" style="left:2206px;top:1158px;width:607px;height:3px;background:#f4f4f5;"></div>
<div class="b" style="left:2206px;top:1241px;width:607px;height:2px;background:#d8d9dc;"></div>
<span class="t" style="left:1064.0px;top:982.4px;font-size:32px;line-height:32px;color:#172b4d;letter-spacing:0.35px;">600.00mcore</span>
<span class="t" style="left:1064.8px;top:1063.9px;font-size:32px;line-height:32px;color:#172b4d;letter-spacing:0.28px;">400.00mcore</span>
<span class="t" style="left:1064.5px;top:1143.9px;font-size:32px;line-height:32px;color:#172b4d;letter-spacing:0.30px;">200.00mcore</span>
<span class="t" style="left:1138.8px;top:1227.4px;font-size:32px;line-height:32px;color:#172b4d;">0 mcore</span>
<span class="t" style="left:2038.8px;top:983.1px;font-size:30.5px;line-height:30.5px;color:#172b4d;letter-spacing:0.10px;">1.68GB</span>
<span class="t" style="left:2043.8px;top:1064.6px;font-size:30.5px;line-height:30.5px;color:#172b4d;letter-spacing:-0.90px;">1.12GB</span>
<span class="t" style="left:1997.8px;top:1144.1px;font-size:31.5px;line-height:31.5px;color:#172b4d;letter-spacing:0.21px;">572.20MB</span>
<span class="t" style="left:2072.8px;top:1228.1px;font-size:30.5px;line-height:30.5px;color:#172b4d;letter-spacing:0.08px;">0 GB</span>
<span class="t" style="left:1409.0px;top:1303.4px;font-size:32px;line-height:32px;color:#172b4d;letter-spacing:0.19px;">15:30</span>
<span class="t" style="left:1685.0px;top:1303.4px;font-size:32px;line-height:32px;color:#172b4d;letter-spacing:0.19px;">16:00</span>
<span class="t" style="left:2309.0px;top:1303.4px;font-size:32px;line-height:32px;color:#172b4d;letter-spacing:0.19px;">15:30</span>
<span class="t" style="left:2607.0px;top:1303.4px;font-size:32px;line-height:32px;color:#172b4d;letter-spacing:0.19px;">16:00</span>
<svg class="b" style="left:0;top:0" width="3836" height="1834" fill="none"><polyline points="1321.9,1104.9 1330.4,1086.6 1336.5,1097.6 1340.2,1075.7 1345.0,1125.1 1349.9,1084.2 1354.8,1119.5 1359.7,1074.4 1363.3,1066.6 1369.4,1085.4 1376.7,1084.2 1381.6,1101.7 1385.7,1062.3 1390.6,1091.5 1398.6,1087.8 1404.7,1080.5 1412.5,1095.1 1418.1,1076.9 1423.0,1053.7 1427.1,1074.4 1432.0,1095.9 1438.3,1076.4 1441.7,1081.7 1445.6,1100.0 1451.0,1066.6 1455.8,1085.4 1464.4,1076.4 1469.2,1081.7 1473.4,1076.4 1478.2,1087.8 1486.3,1086.6 1492.4,1079.3 1497.2,1121.9 1500.9,1065.9 1505.7,1089.0 1514.3,1079.3 1520.4,1093.4 1528.9,1085.4 1534.2,1090.3 1538.6,1103.2 1543.5,1100.0 1547.9,1079.8 1552.0,1101.2 1555.7,1057.9 1560.0,1074.4 1564.9,1093.4 1570.8,1078.8 1578.8,1093.4 1583.7,1065.9 1589.7,1081.7 1596.6,1088.6 1601.9,1120.7 1611.7,1083.0 1616.0,1093.4 1620.9,1091.5 1625.1,1068.4 1629.9,1117.8 1635.5,1084.2 1639.7,1112.9 1647.7,1063.5 1652.6,1090.3 1657.9,1076.4 1665.2,1074.4 1670.6,1097.6 1675.5,1070.8 1680.3,1112.9 1685.9,1085.4 1690.8,1083.0 1695.7,1091.5 1704.2,1085.4 1707.8,1106.1 1712.7,1081.7 1716.8,1080.5 1721.2,1070.8 1726.1,1081.7 1730.5,1072.0 1735.8,1091.5 1740.2,1085.4 1745.1,1115.3 1750.0,1066.6 1754.8,1087.8 1757.8,1125.1 1773.6,1075.7 1777.2,1123.6 1782.1,1083.7 1786.5,1083.7 1790.6,1096.4 1794.8,1093.4 1800.4,1126.8 1806.0,1125.6 1812.5,1105.6 1817.4,1103.7 1823.5,1093.4 1827.9,1092.7 1832.0,1078.1 1836.9,1074.4 1841.0,1081.7 1845.4,1101.2 1849.8,1078.8 1855.1,1117.8 1860.5,1070.1 1864.9,1084.2 1869.3,1091.0 1874.6,1080.5" stroke="#0fba86" stroke-width="5" stroke-linejoin="round" stroke-linecap="round"/></svg>
<svg class="b" style="left:0;top:0" width="3836" height="1834" fill="none"><polyline points="2211.1,1019.4 2214.5,1019.4 2217.8,1020.5 2221.2,1019.7 2224.5,1020.7 2227.8,1020.7 2231.2,1020.3 2234.5,1021.4 2237.9,1020.8 2241.2,1021.7 2244.6,1021.3 2247.9,1021.5 2251.3,1022.4 2254.6,1023.3 2258.1,1021.4 2261.7,1020.9 2265.2,1020.9 2268.8,1020.8 2272.3,1019.5 2275.9,1018.5 2279.4,1018.9 2282.7,1017.2 2285.9,1018.8 2289.1,1017.8 2292.4,1017.6 2295.6,1017.6 2298.8,1018.0 2302.0,1018.9 2305.3,1017.8 2308.5,1018.6 2311.7,1018.8 2315.5,1019.5 2319.2,1021.1 2322.6,1020.2 2326.1,1020.1 2329.5,1020.3 2333.0,1021.2 2336.4,1020.7 2339.8,1020.4 2343.3,1020.9 2346.7,1020.6 2350.2,1020.3 2353.6,1021.1 2357.0,1020.9 2360.5,1020.1 2363.9,1020.6 2367.6,1019.9 2371.4,1019.9 2375.1,1019.0 2378.8,1017.6 2382.1,1018.7 2385.4,1017.0 2388.8,1017.4 2392.1,1017.8 2395.4,1016.6 2398.7,1017.0 2402.0,1016.0 2405.3,1017.0 2408.6,1017.0 2411.9,1016.8 2415.3,1017.5 2418.6,1016.7 2421.9,1017.5 2425.2,1017.5 2428.5,1017.7 2431.8,1017.6 2435.1,1018.5 2438.4,1018.8 2442.2,1019.5 2445.9,1021.5 2449.6,1021.9 2453.2,1022.7 2456.8,1022.1 2460.3,1022.3 2463.9,1021.6 2467.5,1020.2 2471.1,1019.9 2474.6,1020.0 2478.2,1018.4 2481.5,1018.8 2484.8,1017.8 2488.1,1017.3 2491.4,1016.8 2494.8,1017.7 2498.1,1016.1 2501.8,1017.4 2505.5,1018.7 2509.3,1020.6 2513.0,1020.2 2516.7,1020.5 2520.4,1020.2 2524.2,1020.4 2527.9,1019.8 2534.1,1021.6 2537.8,1020.0 2541.6,1019.6 2545.3,1019.0 2549.0,1019.3 2552.7,1018.8 2556.0,1017.9 2559.4,1018.4 2562.7,1019.0 2566.0,1019.5 2569.3,1020.5 2572.6,1021.2 2576.3,1019.3 2580.1,1017.6 2583.5,1018.4 2586.8,1018.3 2590.2,1018.6 2593.6,1019.3 2597.0,1018.9 2600.4,1018.5 2603.8,1018.7 2607.2,1018.8 2610.6,1017.7 2613.9,1019.2 2617.3,1019.0 2620.6,1020.3 2624.0,1021.2 2627.3,1021.5 2630.7,1021.2 2634.2,1020.2 2637.7,1020.8 2641.2,1019.4 2644.7,1019.0 2648.4,1019.3 2652.1,1019.3 2655.8,1019.7 2659.6,1019.3 2663.3,1019.3 2667.0,1019.6 2670.3,1020.4 2673.6,1021.7 2677.0,1021.9 2680.7,1022.4 2684.4,1020.8 2688.1,1018.9 2691.9,1018.1 2695.2,1018.2 2698.5,1018.2 2701.8,1017.7 2705.1,1018.9 2708.4,1019.1 2711.7,1018.1 2715.1,1018.1 2718.4,1017.3 2721.7,1017.3 2725.0,1019.8 2728.3,1021.7 2731.6,1024.8 2735.3,1024.2 2739.1,1024.5 2742.8,1026.7 2746.5,1026.5 2750.2,1025.5 2754.0,1025.9 2757.7,1024.7 2761.4,1025.3 2765.2,1026.2 2768.9,1026.1 2772.6,1025.9 2776.3,1025.3 2779.6,1024.7 2783.0,1023.6 2786.3,1024.0 2789.6,1024.1 2792.9,1025.1 2796.2,1024.9 2800.4,1024.6 2804.5,1025.4 2808.6,1024.7" stroke="#8a1a0b" stroke-width="4.300" stroke-linejoin="round" stroke-linecap="round"/></svg>
<svg class="b" style="left:3240px;top:1070px;" width="180" height="160" viewBox="0 0 1386 1232" fill="none" stroke-linecap="round" stroke-linejoin="round"><path d="M520 452 C400 475 325 525 325 585 C325 665 500 735 708 735 C916 735 1091 665 1091 585 C1091 525 1016 475 896 452" stroke="#2b2e3a" stroke-width="18"/>
<path d="M332 610 C380 670 540 705 708 705 C876 705 1036 670 1084 610" stroke="#2b2e3a" stroke-width="12"/>
<path d="M524 452 C524 350 610 272 708 272 C806 272 892 350 892 452 C870 500 790 530 708 530 C626 530 546 500 524 452 Z" stroke="#2b2e3a" stroke-width="18" fill="#fff"/>
<path d="M622 325 C585 360 565 410 572 470 C590 420 600 370 622 325 Z" fill="#8d90a0" stroke="#2b2e3a" stroke-width="6"/>
<circle cx="425" cy="565" r="17" fill="#2b2e3a"/><circle cx="555" cy="612" r="17" fill="#2b2e3a"/><circle cx="708" cy="632" r="17" fill="#2b2e3a"/><circle cx="865" cy="610" r="17" fill="#2b2e3a"/><circle cx="992" cy="565" r="17" fill="#2b2e3a"/>
<path d="M365 722 L295 945 M532 775 L497 1075 M820 775 L820 995 M992 775 L1035 1100" stroke="#5754cb" stroke-width="19"/><path d="M378 154 Q392.0 196.0 434 210 Q392.0 224.0 378 266 Q364.0 224.0 322 210 Q364.0 196.0 378 154 Z" fill="#5754cb" stroke="none"/><path d="M712 159 Q721.0 186.0 748 195 Q721.0 204.0 712 231 Q703.0 204.0 676 195 Q703.0 186.0 712 159 Z" fill="#5754cb" stroke="none"/><path d="M970 198 Q980.0 228.0 1010 238 Q980.0 248.0 970 278 Q960.0 248.0 930 238 Q960.0 228.0 970 198 Z" fill="#5754cb" stroke="none"/><path d="M1100 329 Q1114.0 371.0 1156 385 Q1114.0 399.0 1100 441 Q1086.0 399.0 1044 385 Q1086.0 371.0 1100 329 Z" fill="#5754cb" stroke="none"/><path d="M447 347 Q456.5 375.5 485 385 Q456.5 394.5 447 423 Q437.5 394.5 409 385 Q437.5 375.5 447 347 Z" fill="#5754cb" stroke="none"/><path d="M238 479 Q247.5 507.5 276 517 Q247.5 526.5 238 555 Q228.5 526.5 200 517 Q228.5 507.5 238 479 Z" fill="#5754cb" stroke="none"/></svg>
<span class="t" style="left:2979.0px;top:1241.2px;font-size:36.5px;line-height:36.5px;color:#33363e;letter-spacing:1.83px;">No data found for selected time period.</span>
<div class="b" style="left:1012px;top:1410px;width:1363px;height:500px;background:#fff;border-radius:10px;border:2px solid #f3f3f5;box-shadow:0 2px 26px rgba(20,20,40,.05);"></div>
<div class="b" style="left:2412px;top:1410px;width:1363px;height:500px;background:#fff;border-radius:10px;border:2px solid #f3f3f5;box-shadow:0 2px 26px rgba(20,20,40,.05);"></div>
<span class="t" style="left:1043.2px;top:1446.3px;font-size:28px;line-height:28px;color:#63676f;font-weight:700;">POD PHASE</span>
<span class="t" style="left:2444.0px;top:1446.3px;font-size:28px;line-height:28px;color:#63676f;font-weight:700;letter-spacing:0.04px;">CONTAINER PHASE</span>
<svg class="b" style="left:0;top:0" width="3836" height="1834" fill="none"><circle cx="1693" cy="1735" r="94.500" stroke="#17126b" stroke-width="123"/><circle cx="3092" cy="1735" r="94.500" stroke="#6a63d3" stroke-width="123"/></svg>
<span class="t" style="left:3108.8px;top:1644.1px;font-size:51px;line-height:51px;color:rgba(150,150,150,.62);letter-spacing:-0.57px;">Activate Windows</span>
<span class="t" style="left:3107.2px;top:1710.9px;font-size:35px;line-height:35px;color:rgba(150,150,150,.62);letter-spacing:0.57px;">Go to Settings to activate Windows.</span>
<div class="b" style="left:988px;top:924px;width:11px;height:148px;background:#f0f0f2;border-radius:6px;"></div>
</body></html>
